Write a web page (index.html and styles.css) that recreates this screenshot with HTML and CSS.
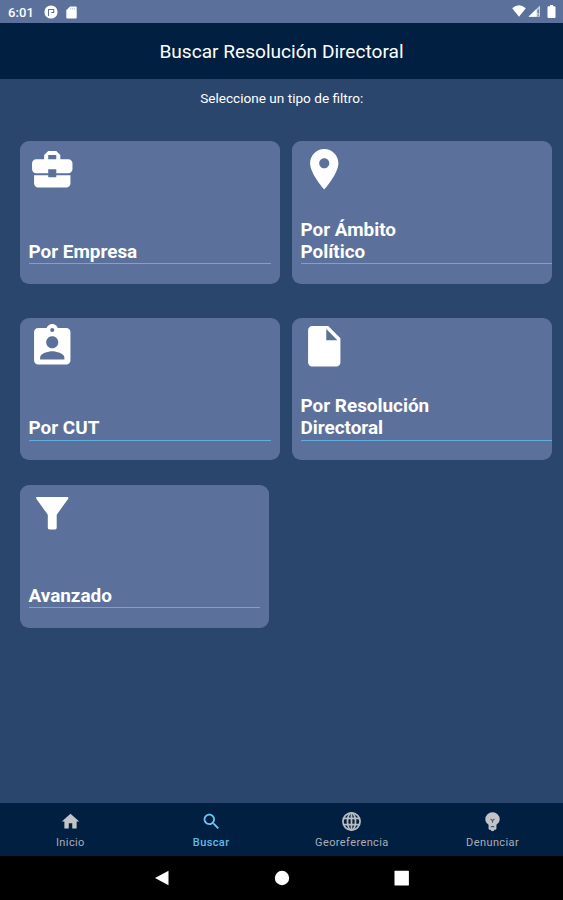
FILE: index.html
```html
<!DOCTYPE html>
<html lang="es">
<head>
    <meta charset="UTF-8">
    <meta name="viewport" content="width=device-width, initial-scale=1.0">
    <title>Buscar Resolución Directoral</title>
    <link rel="stylesheet" href="styles.css">
</head>
<body>
    <div class="status">
        <span class="time">6:01</span>
        <svg class="app" viewBox="0 0 14 14"><circle cx="7" cy="7" r="6.600" fill="#fff"/><path d="M4.500 11V4.500h5.200v3H7.300" fill="none" stroke="#5b719b" stroke-width="1.100"/></svg>
        <svg class="sd" viewBox="0 0 11 13"><path d="M4 .5h5.700q1 0 1 1v10q0 1-1 1H1.300q-1 0-1-1V4.200z" fill="#fff"/><path d="M4.600 2v1.500M6.500 2v1.500M8.400 2v1.500" stroke="#b4bfd4" stroke-width=".8"/></svg>
        <div class="signals">
            <svg width="14" height="12" viewBox="0 0 14 12"><path d="M7 11.800L.2 3.300Q7-2.600 13.800 3.300z" fill="#fff"/></svg>
            <svg width="13" height="12" viewBox="0 0 13 12"><path d="M.5 11.800L12 .5v11.300z" fill="#c9d1e0"/><path d="M.5 11.800L8.500 4v7.800z" fill="#fff"/><path d="M10.200 4.500v3.800M10.200 9.500v1.200" stroke="#5b719b" stroke-width="1.300"/></svg>
            <svg class="battery" width="9" height="13" viewBox="0 0 9 13"><path d="M3 0h3v1.300h1.500q1 0 1 1V12q0 1-1 1h-6q-1 0-1-1V2.300q0-1 1-1H3z" fill="#fff"/></svg>
        </div>
    </div>
    <header class="header"><h1>Buscar Resolución Directoral</h1></header>
    <main class="main">
        <p class="hint">Seleccione un tipo de filtro:</p>
        <div class="row">
            <a class="card">
                <svg class="icon" viewBox="0 0 24 24"><path d="M10 16v-1H3.010L3 19c0 1.110.89 2 2 2h14c1.110 0 2-.89 2-2v-4h-7v1h-4zm10-9h-4.010V5l-2-2h-4l-2 2v2H4c-1.100 0-2 .9-2 2v3c0 1.110.89 2 2 2h6v-2h4v2h6c1.100 0 2-.9 2-2V9c0-1.100-.9-2-2-2zm-6 0h-4V5h4v2z"/></svg>
                <span class="label">Por Empresa</span>
            </a>
            <a class="card wide">
                <svg class="icon" viewBox="0 0 24 24"><path d="M12 2C8.130 2 5 5.130 5 9c0 5.250 7 13 7 13s7-7.750 7-13c0-3.870-3.130-7-7-7zm0 9.500c-1.380 0-2.500-1.120-2.500-2.500s1.120-2.500 2.500-2.500 2.500 1.120 2.500 2.500-1.120 2.500-2.500 2.500z"/></svg>
                <span class="label">Por Ámbito<br>Político</span>
            </a>
        </div>
        <div class="row second">
            <a class="card">
                <svg class="icon" viewBox="0 0 24 24"><path d="M19 3h-4.180C14.400 1.840 13.300 1 12 1c-1.300 0-2.400.84-2.820 2H5c-1.100 0-2 .9-2 2v14c0 1.100.9 2 2 2h14c1.100 0 2-.9 2-2V5c0-1.100-.9-2-2-2zm-7 0c.55 0 1 .45 1 1s-.45 1-1 1-1-.45-1-1 .45-1 1-1zm0 4c1.660 0 3 1.340 3 3s-1.340 3-3 3-3-1.340-3-3 1.340-3 3-3zm6 11.500H6v-.9c0-2 4-3.100 6-3.100s6 1.100 6 3.100v.9z"/></svg>
                <span class="label">Por CUT</span>
            </a>
            <a class="card wide">
                <svg class="icon" viewBox="0 0 24 24"><path d="M6 2c-1.100 0-1.990.9-1.990 2L4 20c0 1.100.89 2 1.990 2H18c1.100 0 2-.9 2-2V8l-6-6H6zm7 7V3.500L18.500 9H13z"/></svg>
                <span class="label">Por Resolución<br>Directoral</span>
            </a>
        </div>
        <div class="row third">
            <a class="card small">
                <svg class="icon" viewBox="0 0 24 24"><path d="M4.600 4h14.800c.6 0 .8.500.4 1L14.200 12.700V19.200q0 .8-.8.800h-2.800q-.8 0-.8-.8V12.700L4.200 5c-.4-.5-.2-1 .4-1z"/></svg>
                <span class="label">Avanzado</span>
            </a>
        </div>
    </main>
    <nav class="tabs">
        <a class="tab">
            <svg viewBox="0 0 24 24"><path d="M10 20v-6h4v6h5v-8h3L12 3 2 12h3v8z"/></svg>
            <span>Inicio</span>
        </a>
        <a class="tab active">
            <svg viewBox="0 0 24 24"><path d="M15.500 14h-.79l-.28-.27C15.410 12.590 16 11.110 16 9.500 16 5.910 13.090 3 9.500 3S3 5.910 3 9.500 5.910 16 9.500 16c1.610 0 3.090-.59 4.230-1.570l.27.28v.79l5 4.990L20.490 19l-4.990-5zm-6 0C7.010 14 5 11.990 5 9.500S7.010 5 9.500 5 14 7.010 14 9.500 11.990 14 9.500 14z"/></svg>
            <span>Buscar</span>
        </a>
        <a class="tab">
            <svg viewBox="0 0 24 24"><g fill="none" stroke="#b9bcc2" stroke-width="2"><circle cx="12" cy="12" r="9.800"/><ellipse cx="12" cy="12" rx="4.600" ry="9.800"/><path d="M3 8.500h18M3 15.500h18M12 3v18"/></g></svg>
            <span>Georeferencia</span>
        </a>
        <a class="tab">
            <svg viewBox="0 0 24 24"><path d="M12 1.500a8 8 0 0 0-8.200 7.900c0 3 1.500 4.600 3.700 6.200V20c0 .8.600 1.400 1.400 1.400h.9c.3 1 1.100 1.600 2.200 1.600s1.900-.6 2.200-1.600h.9c.8 0 1.400-.6 1.400-1.400v-4.400c2.200-1.600 3.700-3.200 3.700-6.200A8 8 0 0 0 12 1.500z"/><path d="M9.800 9l2.200 2 2.200-2M12 11v2.500M10 17.800h4" fill="none" stroke="#4c5b70" stroke-width="1.300"/></svg>
            <span>Denunciar</span>
        </a>
    </nav>
    <div class="system">
        <svg width="16" height="16" viewBox="0 0 16 16"><path d="M1 8L14.500.8v14.400z"/></svg>
        <svg width="16" height="16" viewBox="0 0 16 16"><circle cx="8" cy="8" r="7.200"/></svg>
        <svg width="16" height="16" viewBox="0 0 16 16"><rect x=".5" y=".8" width="14.400" height="14.800" rx=".6"/></svg>
    </div>
</body>
</html>
```
FILE: styles.css
```css
*{
    box-sizing: border-box;
}
body{
    margin: 0;
    height: 900px;
    display: flex;
    flex-direction: column;
    background-color: #2a466d;
    color: #fff;
    font-family: Roboto, "Liberation Sans", sans-serif;
    overflow: hidden;
}
svg{
    display: block;
    flex: none;
    overflow: visible;
}
.status{
    height: 23px;
    display: flex;
    align-items: center;
    padding: 1px 7px 0 8px;
    background-color: #5b719b;
}
.time{
    width: 27px;
    font-size: 13px;
    font-weight: 500;
    letter-spacing: 0.1px;
}
.app{
    width: 14px;
    height: 14px;
    margin-left: 9px;
}
.sd{
    width: 11px;
    height: 13px;
    margin-left: 8px;
}
.signals{
    display: flex;
    align-items: center;
    gap: 2px;
    margin-left: auto;
    padding-bottom: 2px;
}
.battery{
    margin-left: 4px;
}
.header{
    height: 56px;
    display: flex;
    align-items: center;
    justify-content: center;
    background-color: #001f41;
}
h1{
    margin: 0;
    font-size: 19.1px;
    font-weight: 400;
}
.main{
    flex: 1;
    padding: 0 11px 0 19.5px;
}
.hint{
    margin: 0;
    height: 62px;
    padding: 11px 8px 0 0;
    font-size: 13.6px;
    line-height: 16px;
    text-align: center;
}
.row{
    display: flex;
    gap: 11.5px;
}
.second{
    margin-top: 34px;
}
.third{
    margin-top: 25px;
}
.card{
    width: 260.5px;
    height: 142.5px;
    display: flex;
    flex-direction: column;
    justify-content: space-between;
    padding: 4px 9px 19.5px;
    border-radius: 9px;
    background-color: #5b719b;
}
.wide{
    padding-right: 0;
}
.small{
    width: 249.5px;
}
.icon{
    width: 48.5px;
    height: 48.5px;
    margin-left: -1px;
    fill: #fff;
}
.label{
    border-bottom: 1px solid #62addb;
    font-size: 18.9px;
    font-weight: 700;
    line-height: 22px;
}
.second .label{
    padding-bottom: 1px;
}
.second .card{
    padding-bottom: 19px;
}
.tabs{
    height: 53px;
    display: flex;
    background-color: #001f41;
}
.tab{
    flex: 1;
    display: flex;
    flex-direction: column;
    align-items: center;
    padding-top: 8px;
    color: #a9afb9;
    font-size: 11px;
    line-height: 14px;
    letter-spacing: 0.4px;
}
.tab svg{
    width: 21px;
    height: 21px;
    margin-bottom: 4px;
    fill: #c2c4c8;
}
.tab.active{
    color: #62bce8;
    font-weight: 500;
}
.tab.active svg{
    fill: #6cc8f2;
}
.system{
    height: 44px;
    display: flex;
    justify-content: center;
    align-items: center;
    gap: 104px;
    background-color: #000;
    fill: #fff;
}
```
